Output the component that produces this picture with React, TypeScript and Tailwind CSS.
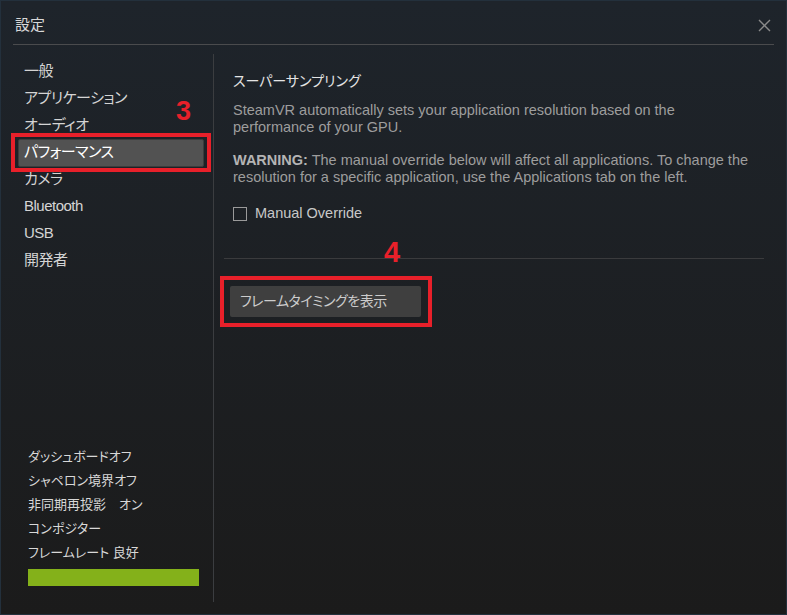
import React from "react";

const font = { fontFamily: '"Liberation Sans", "Noto Sans CJK JP", sans-serif' };

const navItems = ["一般", "アプリケーション", "オーディオ", "パフォーマンス", "カメラ", "Bluetooth", "USB", "開発者"];
const statusItems = ["ダッシュボードオフ", "シャペロン境界オフ", "非同期再投影　オン", "コンポジター", "フレームレート 良好"];

function NavItem({ label, active }: { label: string; active?: boolean }) {
  if (!active) {
    return <div className="h-[27px] flex items-center pl-[23px] text-[15px] text-[#d4d4d4] tracking-[-0.5px]">{label}</div>;
  }
  return (
    <div className="relative h-[27px] flex items-center">
      <div className="ml-[17px] w-[186px] h-[28px] flex items-center pl-[5px] rounded-[2px] bg-[#525252] border border-[#3c3c3c] text-[15px] text-white tracking-[-0.5px]">
        {label}
      </div>
      {/* annotation */}
      <div className="absolute left-[10px] top-[-6px] w-[200px] h-[39px] border-[4px] border-[#e8202a]" />
      <div className="absolute left-[175px] top-[-43px] text-[27px] leading-[30px] font-bold text-[#e8202a]">3</div>
    </div>
  );
}

export default function App() {
  return (
    <div
      style={font}
      className="w-[787px] h-[615px] flex flex-col bg-gradient-to-b from-[#1e242b] to-[#1b1b1b] border border-[#23303c] overflow-hidden [font-feature-settings:'palt']"
    >
      <div className="h-[43px] flex items-center justify-between pl-[14px] pr-[15px] pt-[5px]">
        <span className="text-[15px] text-[#d8d8d8]">設定</span>
        <svg width="13" height="13" viewBox="0 0 13 13">
          <path d="M1 1 L12 12 M12 1 L1 12" stroke="#8a8a8a" strokeWidth="1.4" />
        </svg>
      </div>
      <div className="mx-[12px] h-px bg-[#4a4b4d]" />

      <div className="flex flex-1 pt-[9px] pb-[12px]">
        <div className="w-[213px] flex flex-col justify-between border-r border-[#3b3d40] pt-[4px]">
          <div className="flex flex-col">
            {navItems.map((n, i) => (
              <NavItem key={n} label={n} active={i === 3} />
            ))}
          </div>
          <div className="flex flex-col pl-[27px] pb-[16px]">
            {statusItems.map((s) => (
              <div key={s} className="h-[24px] flex items-center text-[13px] text-[#d8d8d8] whitespace-pre">{s}</div>
            ))}
            <div className="mt-[4px] w-[171px] h-[17px] bg-[#84b11a]" />
          </div>
        </div>

        <div className="flex-1 pl-[10px] pr-[22px]">
          <div className="pl-[9px] pt-[17px]">
            <div className="text-[14px] text-[#e4e4e4] leading-[20px]">スーパーサンプリング</div>
            <p className="mt-[11px] text-[14.5px] leading-[17px] text-[#9d9d9d] whitespace-nowrap">
              SteamVR automatically sets your application resolution based on the
              <br />
              performance of your GPU.
            </p>
            <p className="mt-[16px] text-[14.5px] leading-[17px] text-[#9d9d9d] whitespace-nowrap">
              <b className="text-[#b4b4b4]">WARNING:</b> The manual override below will affect all applications. To change the
              <br />
              resolution for a specific application, use the Applications tab on the left.
            </p>
            <label className="mt-[17px] flex items-center gap-[8px]">
              <span className="w-[14px] h-[14px] border border-[#9a9a9a]" />
              <span className="text-[14.5px] text-[#c8c8c8]">Manual Override</span>
            </label>
          </div>

          <div className="relative mt-[33px] h-px bg-[#3a3b3d]">
            <div className="absolute left-[160px] top-[-21px] text-[29px] font-bold text-[#e8202a] leading-[30px]">4</div>
          </div>

          <div className="relative mt-[27px] ml-[6px] w-[191px]">
            <button className="w-[191px] h-[31px] flex items-center pl-[10px] rounded-[2px] bg-[#3f3f3f] text-[14px] text-[#cccccc] tracking-[-0.5px]">
              フレームタイミングを表示
            </button>
            <div className="absolute left-[-10px] top-[-10px] w-[212px] h-[51px] border-[4px] border-[#e8202a]" />
          </div>
        </div>
      </div>
    </div>
  );
}
